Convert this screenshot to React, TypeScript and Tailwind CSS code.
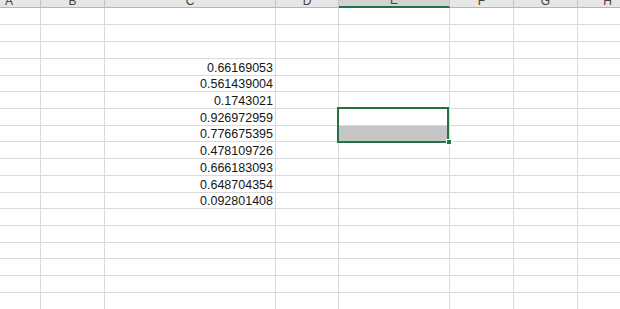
const columns = [
  { key: "A", w: "w-[41px]" },
  { key: "B", w: "w-[64px]" },
  { key: "C", w: "w-[171px]" },
  { key: "D", w: "w-[63px]" },
  { key: "E", w: "w-[111px]" },
  { key: "F", w: "w-[64px]" },
  { key: "G", w: "w-[64px]" },
  { key: "H", w: "w-[60px]" },
];

// row heights include the bottom grid line
const rowHeights = [
  "h-[17px]", "h-[17px]", "h-[17px]", "h-[17px]", "h-[16px]", "h-[17px]",
  "h-[17px]", "h-[16px]", "h-[17px]", "h-[17px]", "h-[17px]", "h-[16px]",
  "h-[17px]", "h-[17px]", "h-[16px]", "h-[17px]", "h-[17px]", "h-[17px]",
];

const values: Record<number, string> = {
  3: "0.66169053",
  4: "0.561439004",
  5: "0.1743021",
  6: "0.926972959",
  7: "0.776675395",
  8: "0.478109726",
  9: "0.666183093",
  10: "0.648704354",
  11: "0.092801408",
};

export default function App() {
  return (
    <div className="relative w-[620px] h-[309px] overflow-hidden bg-white font-['Liberation_Sans',Arial,sans-serif]">
      {/* column headers, scrolled so only the bottom is visible */}
      <div className="flex h-[8px]">
        {columns.map((c) => (
          <div
            key={c.key}
            className={`${c.w} shrink-0 flex items-end overflow-hidden border-r border-r-[#c4c4c4] ${
              c.key === "A" ? "justify-start pl-[5px]" : "justify-center"
            } ${
              c.key === "E"
                ? "bg-[#d3d3d3] border-b-2 border-b-[#217346]"
                : "bg-[#e6e6e6] border-b border-b-[#b6b6b6]"
            }`}
          >
            <span className="text-[12px] leading-[12px] text-[#444]">{c.key}</span>
          </div>
        ))}
      </div>

      {rowHeights.map((h, r) => (
        <div key={r} className={`flex ${h}`}>
          {columns.map((c) => (
            <div
              key={c.key}
              className={`${c.w} shrink-0 border-r border-b border-[#dadada] flex items-center ${
                c.key === "C" ? "justify-end pr-[2px] pt-[2px]" : ""
              } ${c.key === "E" && r === 7 ? "bg-[#c6c6c6]" : ""}`}
            >
              {c.key === "C" && values[r] && (
                <span className="text-[12.5px] leading-none text-[#161616]">{values[r]}</span>
              )}
            </div>
          ))}
        </div>
      ))}

      {/* selection E7:E8 */}
      <div className="absolute left-[337px] top-[107px] w-[112px] h-[36px] border-2 border-[#217346]" />
      <div className="absolute left-[446px] top-[139px] w-[6px] h-[6px] bg-[#217346] border border-white" />
    </div>
  );
}
